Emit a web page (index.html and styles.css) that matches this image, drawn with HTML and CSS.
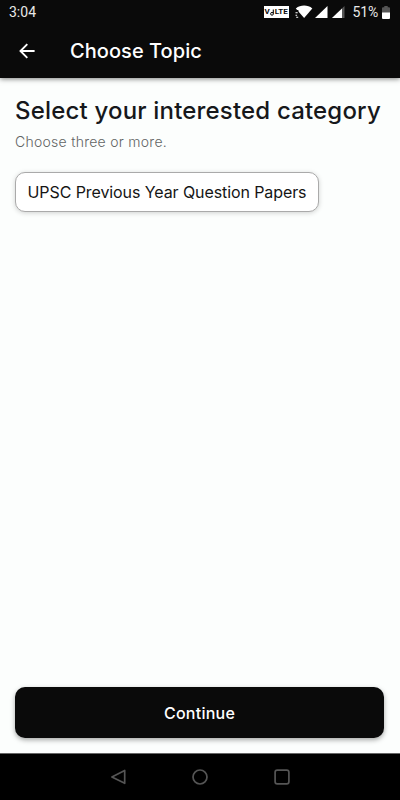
FILE: index.html
```html
<!DOCTYPE html>
<html lang="en">
<head>
  <meta charset="UTF-8" />
  <meta name="viewport" content="width=device-width, initial-scale=1.0" />
  <title>Choose Topic</title>
  <link rel="stylesheet" href="styles.css">
</head>
<body>
  <div class="screen">
    <header class="header">
      <div class="status-bar">
        <span class="clock">3:04</span>
        <div class="status-icons">
          <span class="volte"><span>V</span><svg width="5" height="7" viewBox="0 0 5 7"><path d="M3.3 0.5v4" stroke="#0a0a0a" stroke-width="1.1"/><circle cx="2" cy="4.8" r="1.4" fill="none" stroke="#0a0a0a"/></svg><span>LTE</span></span>
          <svg class="wifi" width="18" height="14" viewBox="0 0 18 14">
            <path d="M0.8 3.4C5.5-0.4 12.8-0.4 17.3 3.4L9.1 13Z" fill="#fff"/>
            <path d="M0 6.5h3.4M0 9.4h3M1.5 12.2h2.3" stroke="#0a0a0a" stroke-width="3"/>
            <path d="M0.5 7.8h2.2M0.5 10.3h1.6M1.2 12.2h2" stroke="#fff" stroke-width="1.1"/>
          </svg>
          <svg class="signal" width="13" height="12" viewBox="0 0 13 12"><path d="M0 12L12.5 0V12Z" fill="#fff"/></svg>
          <svg class="signal-two" width="13" height="12" viewBox="0 0 13 12"><path d="M0 12L12.5 0V12Z" fill="#555"/><path d="M0 12L10 2.4V12Z" fill="#fff"/></svg>
          <span class="percent">51%</span>
          <svg class="battery" width="8" height="13" viewBox="0 0 8 13"><path d="M2.3 0h3.4v1.2H7q1 0 1 1V7H0V2.2q0-1 1-1h1.3Z" fill="#555"/><path d="M0 6.5h8V12q0 1-1 1H1q-1 0-1-1Z" fill="#fff"/></svg>
        </div>
      </div>
      <div class="toolbar">
        <svg class="back" width="16" height="16" viewBox="0 0 16 16"><path d="M15.6 8H1.6M8.3 1.2L1.5 8l6.8 6.8" fill="none" stroke="#fff" stroke-width="1.9"/></svg>
        <h1 class="title">Choose Topic</h1>
      </div>
    </header>

    <main class="content">
      <h2 class="heading">Select your interested category</h2>
      <p class="hint">Choose three or more.</p>
      <button class="chip"><span>UPSC Previous Year Question Papers</span></button>
      <button class="continue"><span>Continue</span></button>
    </main>

    <nav class="nav-bar">
      <svg width="16" height="17" viewBox="0 0 16 17"><path d="M14.7 1.5v12.8L1.9 7.9Z" fill="none" stroke="#555" stroke-width="1.7" stroke-linejoin="round"/></svg>
      <svg width="16" height="17" viewBox="0 0 16 17"><circle cx="8" cy="8" r="7" fill="none" stroke="#555" stroke-width="1.7"/></svg>
      <svg width="16" height="17" viewBox="0 0 16 17"><rect x="1.1" y="1.1" width="13.8" height="13.8" rx="2.2" fill="none" stroke="#555" stroke-width="1.7"/></svg>
    </nav>
  </div>
</body>
</html>
```

FILE: styles.css
```css
body {
  margin: 0;
  font-family: Inter, "Open Sans", sans-serif;
  background-color: #fcfefd;
}
.screen {
  display: flex;
  flex-direction: column;
  height: 800px;
  overflow: hidden;
}
.header {
  height: 78px;
  background-color: #0a0a0a;
  color: #fff;
  box-shadow: 0 1px 5px rgba(0, 0, 0, 0.5);
}
.status-bar {
  display: flex;
  justify-content: space-between;
  align-items: center;
  height: 24px;
  padding: 0 10px 0 9px;
  font-family: Roboto, sans-serif;
  font-size: 14px;
  color: #e8e8e8;
}
.status-icons {
  display: flex;
  align-items: center;
}
.volte {
  display: flex;
  align-items: center;
  justify-content: center;
  width: 25px;
  height: 12px;
  margin-right: 6px;
  background-color: #fff;
  color: #0a0a0a;
  font-size: 8px;
  font-weight: 700;
  line-height: 12px;
}
.signal {
  margin-left: 2px;
}
.signal-two {
  margin-left: 4px;
}
.percent {
  margin: 0 4px 0 8px;
  letter-spacing: -0.2px;
}
.toolbar {
  display: flex;
  align-items: center;
  height: 54px;
  padding-left: 19px;
}
.title {
  margin: 0 0 0 35px;
  font-size: 20px;
  font-weight: 500;
  letter-spacing: 0.05px;
}
.content {
  flex: 1;
  display: flex;
  flex-direction: column;
  align-items: flex-start;
  padding: 16px 16px 15px 15px;
}
.heading {
  margin: 0;
  font-size: 24px;
  font-weight: 500;
  line-height: 34px;
  letter-spacing: 0.18px;
  color: #16181b;
  white-space: nowrap;
}
.hint {
  margin: 4px 0 20px;
  font-size: 14px;
  font-weight: 300;
  line-height: 20px;
  letter-spacing: 0.27px;
  color: #626464;
}
.chip {
  width: 304px;
  height: 40px;
  padding: 0;
  border: 1px solid #aaa;
  border-radius: 10px;
  background-color: #fff;
  box-shadow: 0 1px 5px rgba(0, 0, 0, 0.18);
  color: #151515;
  font-family: inherit;
  font-size: 16px;
  letter-spacing: -0.09px;
  white-space: nowrap;
}
.continue {
  align-self: stretch;
  height: 51px;
  margin-top: auto;
  border: none;
  border-radius: 10px;
  background-color: #0a0a0a;
  box-shadow: 0 2px 5px rgba(0, 0, 0, 0.35);
  color: #fff;
  font-family: inherit;
  font-size: 16px;
  font-weight: 500;
  letter-spacing: 0.25px;
}
.nav-bar {
  display: flex;
  justify-content: center;
  align-items: center;
  gap: 66px;
  height: 46px;
  border-top: 1px solid #666;
  background-color: #000;
}
```
